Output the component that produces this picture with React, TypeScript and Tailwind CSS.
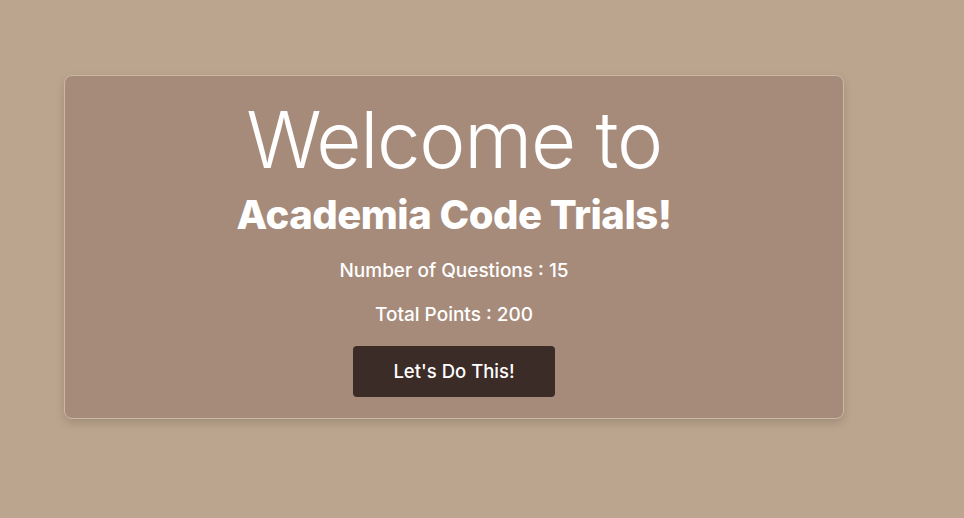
export default function App() {
  return (
    <div className="min-h-screen w-full bg-[#bca58e] pt-[75px] pl-[64px] font-['Inter',sans-serif]">
      <div className="flex h-[344px] w-[780px] flex-col items-center rounded-lg border border-[#cbb7a6] bg-[#a68b7a] pt-[16px] text-white shadow-[0_4px_10px_rgba(0,0,0,0.15)]">
        <h1 className="text-[78px] font-light leading-[96px] tracking-[-1.3px]">Welcome to</h1>
        <h2 className="mt-[3px] text-[40px] font-extrabold leading-[48px] tracking-[-0.5px]">Academia Code Trials!</h2>
        <p className="mt-[18px] text-[19px] font-medium leading-[28px]">Number of Questions : 15</p>
        <p className="mt-[16px] text-[19px] font-medium leading-[28px]">Total Points : 200</p>
        <button className="mt-[17px] h-[51px] w-[202px] rounded bg-[#3b2c28] text-[18.5px] font-medium text-white">
          Let's Do This!
        </button>
      </div>
    </div>
  );
}
